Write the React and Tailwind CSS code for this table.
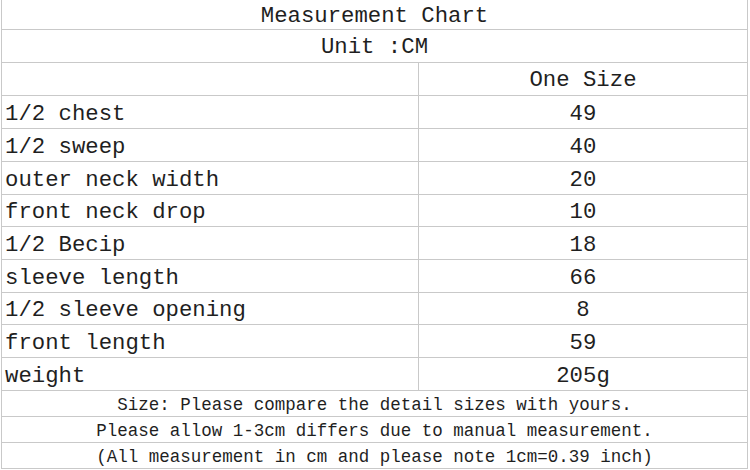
import React from 'react';

const rows = [
  ['1/2 chest', '49', 'h-[33px]'],
  ['1/2 sweep', '40', 'h-[33px]'],
  ['outer neck width', '20', 'h-[33px]'],
  ['front neck drop', '10', 'h-[32px]'],
  ['1/2 Becip', '18', 'h-[33px]'],
  ['sleeve length', '66', 'h-[33px]'],
  ['1/2 sleeve opening', '8', 'h-[32px]'],
  ['front length', '59', 'h-[33px]'],
  ['weight', '205g', 'h-[33px]'],
];

const notes = [
  ['Size: Please compare the detail sizes with yours.', 'h-[26px]'],
  ['Please allow 1-3cm differs due to manual measurement.', 'h-[26px]'],
  ['(All measurement in cm and please note 1cm=0.39 inch)', 'h-[26px]'],
];

const App = () => {
  return (
    <div
      className="w-[750px] h-[470px] bg-white overflow-hidden text-[#1f1f1f]"
      style={{ fontFamily: '"Liberation Mono", "DejaVu Sans Mono", monospace' }}
    >
      <div className="ml-[1px] w-[747px] border-x border-[#c9c9c9]">
        {/* Title rows */}
        <div className="h-[30px] border-b border-[#c9c9c9] flex items-center justify-center text-[22.3px] pt-[5px]">
          Measurement Chart
        </div>
        <div className="h-[33px] border-b border-[#c9c9c9] flex items-center justify-center text-[22.3px] pt-[4px]">
          Unit :CM
        </div>

        {/* Column header */}
        <div className="h-[33px] border-b border-[#c9c9c9] flex">
          <div className="w-[417px] border-r border-[#c9c9c9]" />
          <div className="flex-1 flex items-center justify-center text-[22.3px] pt-[4px]">One Size</div>
        </div>

        {/* Measurements */}
        {rows.map(([label, value, h]) => (
          <div key={label} className={`${h} border-b border-[#c9c9c9] flex`}>
            <div className="w-[417px] border-r border-[#c9c9c9] flex items-center pl-[3px] text-[22.3px] pt-[5px]">
              {label}
            </div>
            <div className="flex-1 flex items-center justify-center text-[22.3px] pt-[5px]">{value}</div>
          </div>
        ))}

        {/* Notes */}
        {notes.map(([text, h]) => (
          <div key={text} className={`${h} border-b border-[#c9c9c9] flex items-center justify-center text-[17.5px] pt-[4px]`}>
            {text}
          </div>
        ))}
      </div>
    </div>
  );
};

export default App;
